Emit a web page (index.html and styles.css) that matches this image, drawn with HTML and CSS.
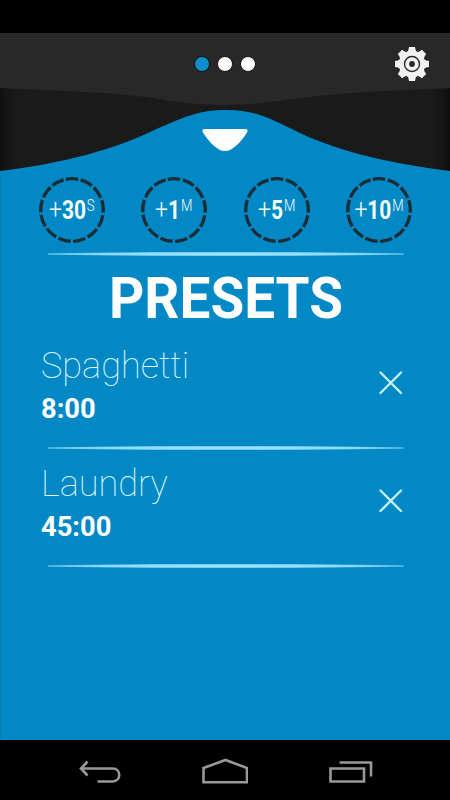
FILE: index.html
```html
<!DOCTYPE html>
<html lang="en">
<head>
<meta charset="utf-8">
<title>Timer presets</title>
<link rel="stylesheet" href="styles.css">
</head>
<body>
<div class="status"></div>
<main class="app">
  <header class="hero">
    <svg class="hero-bg" width="450" height="140" viewBox="0 33 450 140">
      <defs>
        <linearGradient id="edge" x1="0" x2="1" y1="0" y2="0">
          <stop offset="0" stop-color="#101010"/><stop offset=".04" stop-color="#191919"/>
          <stop offset=".96" stop-color="#191919"/><stop offset="1" stop-color="#0e0e0e"/>
        </linearGradient>
        <pattern id="grain" width="4" height="4" patternUnits="userSpaceOnUse">
          <path d="M1 0v2M3 2v2" stroke="#222" stroke-width=".7"/>
        </pattern>
      </defs>
      <rect y="33" width="450" height="140" fill="url(#edge)"/>
      <rect x="4" y="33" width="442" height="140" fill="url(#grain)" opacity=".5"/>
      <path d="M0 33H450V88C405 90 350 92 310 97C280 100 260 105 225 105C190 105 175 101 145 97C105 92 45 90 0 88Z" fill="#282828"/>
      <path d="M0 171C65 163 114 149 150 132C184 117 198 110 227 110C255 110 269 118 300 133C343 153 390 163 450 171V174H0Z" fill="#0289c5"/>
      <path d="M205 129H245Q249 129 247 132.500Q240 144 231 149.500Q225 152.500 219 149.500Q210 144 203 132.500Q201 129 205 129Z" fill="#fff"/>
    </svg>
    <div class="dots"><i class="dot on"></i><i class="dot"></i><i class="dot"></i></div>
    <svg class="gear" width="36" height="36" viewBox="-18 -18 36 36">
      <g fill="#f1f1f1">
        <circle r="13.200"/>
        <path id="teeth" d="M-5-11.500L-3.600-14L-3-17H3L3.600-14L5-11.500V11.500L3.600 14L3 17H-3L-3.600 14L-5 11.500Z"/>
        <use href="#teeth" transform="rotate(45)"/>
        <use href="#teeth" transform="rotate(90)"/>
        <use href="#teeth" transform="rotate(135)"/>
      </g>
      <circle r="7.500" fill="none" stroke="#282828" stroke-width="1.400"/>
      <circle r="2.900" fill="#282828"/>
    </svg>
  </header>
  <section class="adds">
    <div class="add"><svg class="ring" viewBox="0 0 68 68"><circle cx="34" cy="34" r="31.300"/></svg><span class="label"><span class="plus">+</span><b>30</b><span class="unit">S</span></span></div>
    <div class="add"><svg class="ring" viewBox="0 0 68 68"><circle cx="34" cy="34" r="31.300"/></svg><span class="label"><span class="plus">+</span><b>1</b><span class="unit">M</span></span></div>
    <div class="add"><svg class="ring" viewBox="0 0 68 68"><circle cx="34" cy="34" r="31.300"/></svg><span class="label"><span class="plus">+</span><b>5</b><span class="unit">M</span></span></div>
    <div class="add"><svg class="ring" viewBox="0 0 68 68"><circle cx="34" cy="34" r="31.300"/></svg><span class="label"><span class="plus">+</span><b>10</b><span class="unit">M</span></span></div>
  </section>
  <div class="rule"></div>
  <h1 class="title">PRESETS</h1>
  <section class="preset">
    <div><div class="name">Spaghetti</div><div class="time">8:00</div></div>
    <svg class="close" width="24" height="24" viewBox="0 0 24 24"><path d="M1.500 1.500L22 22M22 1.500L1.500 22"/></svg>
  </section>
  <div class="rule"></div>
  <section class="preset">
    <div><div class="name">Laundry</div><div class="time">45:00</div></div>
    <svg class="close" width="24" height="24" viewBox="0 0 24 24"><path d="M1.500 1.500L22 22M22 1.500L1.500 22"/></svg>
  </section>
  <div class="rule"></div>
</main>
<nav class="nav">
  <svg width="42" height="24" viewBox="0 0 42 24"><path d="M8.500 1.500L2 8.500L8.500 15.500M2 8.500H33.500C42.500 8.500 42.500 21.500 33.500 21.500H18.500"/></svg>
  <svg class="home" width="46" height="26" viewBox="0 0 46 26"><path d="M1.500 24.200V10L23.500 2L45 10V24.200Z"/></svg>
  <svg width="44" height="24" viewBox="0 0 44 24"><path d="M1.500 8.500H35V21.500H1.500ZM10.500 2.500H42V16.500"/></svg>
</nav>
</body>
</html>
```
FILE: styles.css
```css
* { box-sizing: border-box; }
body {
  margin: 0;
  width: 450px;
  height: 800px;
  display: flex;
  flex-direction: column;
  background: #000;
  color: #fff;
  font-family: Roboto, "Liberation Sans", sans-serif;
  overflow: hidden;
}
svg { display: block; }
.status { height: 33px; flex: none; }
.app { flex: 1; background: #0289c5; border-left: 1px solid #087aad; }
.hero { position: relative; height: 140px; margin-left: -1px; }
.hero-bg { position: absolute; left: 0; top: 0; }
.dots {
  position: relative;
  display: flex;
  justify-content: center;
  gap: 7px;
  padding-top: 22.500px;
}
.dot { width: 16px; height: 16px; border-radius: 50%; background: #fff; border: 1px solid #111; }
.dot.on { background: #0c8cc8; }
.gear { position: absolute; left: 394px; top: 13px; }
.adds {
  display: flex;
  gap: 34.500px;
  height: 79px;
  padding: 3px 0 0 36.600px;
}
.add { display: grid; width: 68px; height: 68px; place-items: center; }
.add > * { grid-area: 1 / 1; }
.ring { width: 68px; height: 68px; }
.ring circle {
  fill: none;
  stroke: #1b2c35;
  stroke-width: 3.300;
  stroke-dasharray: 12.530 2.600;
  transform: rotate(-101.460deg);
  transform-origin: 34px 34px;
}
.label {
  display: flex;
  align-items: flex-start;
  height: 28px;
  line-height: 28px;
  white-space: nowrap;
  transform: scaleX(.82);
  color: #f4fdff;
}
.plus { font-size: 28px; font-weight: 300; }
.label b { font-size: 25.500px; font-weight: 700; }
.unit { font-size: 16px; font-weight: 300; line-height: 20px; margin-left: 1px; }
.rule {
  height: 4px;
  width: 356px;
  margin-left: 46.500px;
  background: linear-gradient(90deg, #5cbbe6, #8ddaf8 15%, #a2e4fc 50%, #8ddaf8 85%, #5cbbe6);
  clip-path: polygon(0 30%, 30% 6%, 70% 6%, 100% 30%, 100% 68%, 70% 92%, 30% 92%, 0 68%);
}
.title {
  margin: 10px 0 0 1px;
  height: 66px;
  line-height: 66px;
  font-size: 57px;
  font-weight: 700;
  text-align: center;
  transform: scaleX(.963);
}
.preset {
  height: 114px;
  padding: 10px 47px 0 40px;
  display: flex;
  justify-content: space-between;
}
.name {
  font-size: 37.500px;
  font-weight: 100;
  line-height: 46px;
  color: #e3fbff;
  transform: scaleX(.963);
  transform-origin: left;
}
.time {
  font-size: 28.300px;
  font-weight: 700;
  line-height: 41px;
  transform: scaleX(.965);
  transform-origin: left;
}
.close { margin-top: 29px; }
.close path { fill: none; stroke: #c3efff; stroke-width: 2.400; stroke-linecap: round; }
.nav {
  height: 60px;
  flex: none;
  display: flex;
  justify-content: space-between;
  align-items: flex-start;
  padding: 20px 77px 0 79px;
}
.nav path { fill: none; stroke: #999; stroke-width: 2.600; }
.home { margin-top: -2px; }
```
